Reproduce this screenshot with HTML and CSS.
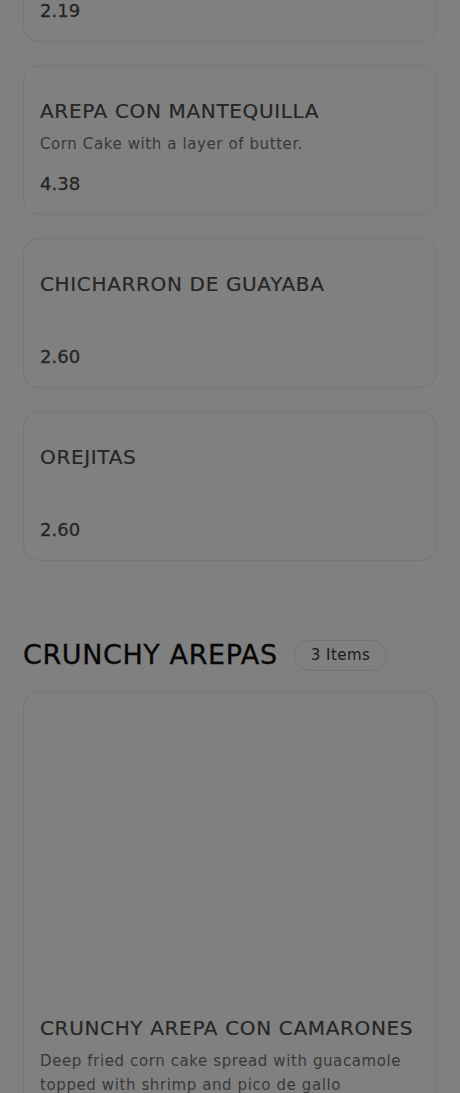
FILE: index.html
```html
<!DOCTYPE html>
<html lang="en">

<head>
    <meta charset="UTF-8">
    <meta name="viewport" content="width=device-width, initial-scale=1.0">
    <title>Menu</title>
    <link rel="stylesheet" href="styles.css">
</head>

<body>
    <main class="menu">
        <section class="category">
            <div class="item-list">
                <div class="item">
                    <h3 class="item-name"></h3>
                    <p class="item-desc"></p>
                    <div class="item-price">2.19</div>
                </div>
                <div class="item">
                    <h3 class="item-name">AREPA CON MANTEQUILLA</h3>
                    <p class="item-desc">Corn Cake with a layer of butter.</p>
                    <div class="item-price">4.38</div>
                </div>
                <div class="item">
                    <h3 class="item-name">CHICHARRON DE GUAYABA</h3>
                    <p class="item-desc"></p>
                    <div class="item-price">2.60</div>
                </div>
                <div class="item">
                    <h3 class="item-name">OREJITAS</h3>
                    <p class="item-desc"></p>
                    <div class="item-price">2.60</div>
                </div>
            </div>
        </section>

        <section class="category">
            <div class="category-header">
                <h2 class="category-title">CRUNCHY AREPAS</h2>
                <span class="category-count">3 Items</span>
            </div>
            <div class="item-list">
                <div class="item">
                    <div class="item-image"></div>
                    <h3 class="item-name">CRUNCHY AREPA CON CAMARONES</h3>
                    <p class="item-desc">Deep fried corn cake spread with guacamole topped with shrimp and pico de gallo</p>
                    <div class="item-price">12.50</div>
                </div>
            </div>
        </section>
    </main>
</body>

</html>
```

FILE: styles.css
```css
body {
    margin: 0;
    padding: 0;
    font-family: 'DejaVu Sans', 'Open Sans', sans-serif;
    background-color: #808080;
    color: #2d2d2d;
    overflow: hidden;
}

.menu {
    padding: 0 23px;
    margin-top: -108px;
}

.item-list {
    display: flex;
    flex-direction: column;
    gap: 23px;
}

.item {
    border: 1px solid #767676;
    border-radius: 16px;
    padding: 20px 16px 18px;
}

.item-image {
    height: 291px;
}

.item-name {
    margin: 10px 0 0;
    font-size: 20px;
    font-weight: 500;
    line-height: 30px;
    letter-spacing: 0.65px;
    color: #262626;
    min-height: 30px;
    -webkit-text-stroke: 0.2px #262626;
}

.item-desc {
    margin: 6px 0 0;
    font-size: 15px;
    line-height: 24px;
    letter-spacing: 0.6px;
    min-height: 24px;
    color: #383838;
}

.item-price {
    margin-top: 16px;
    font-size: 18px;
    font-weight: 500;
    line-height: 24px;
    color: #262626;
    -webkit-text-stroke: 0.3px #262626;
}

.category-header {
    display: flex;
    align-items: center;
    gap: 16px;
    margin: 78px 0 20px;
    height: 32px;
}

.category-title {
    margin: 0;
    font-size: 27px;
    font-weight: 500;
    line-height: 32px;
    letter-spacing: 0.6px;
    color: #070707;
    -webkit-text-stroke: 0.3px #070707;
}

.category-count {
    border: 1px solid #747474;
    border-radius: 16px;
    padding: 0 16px;
    font-size: 15px;
    line-height: 29px;
    letter-spacing: 0.5px;
    color: #1a1a1a;
}
```
